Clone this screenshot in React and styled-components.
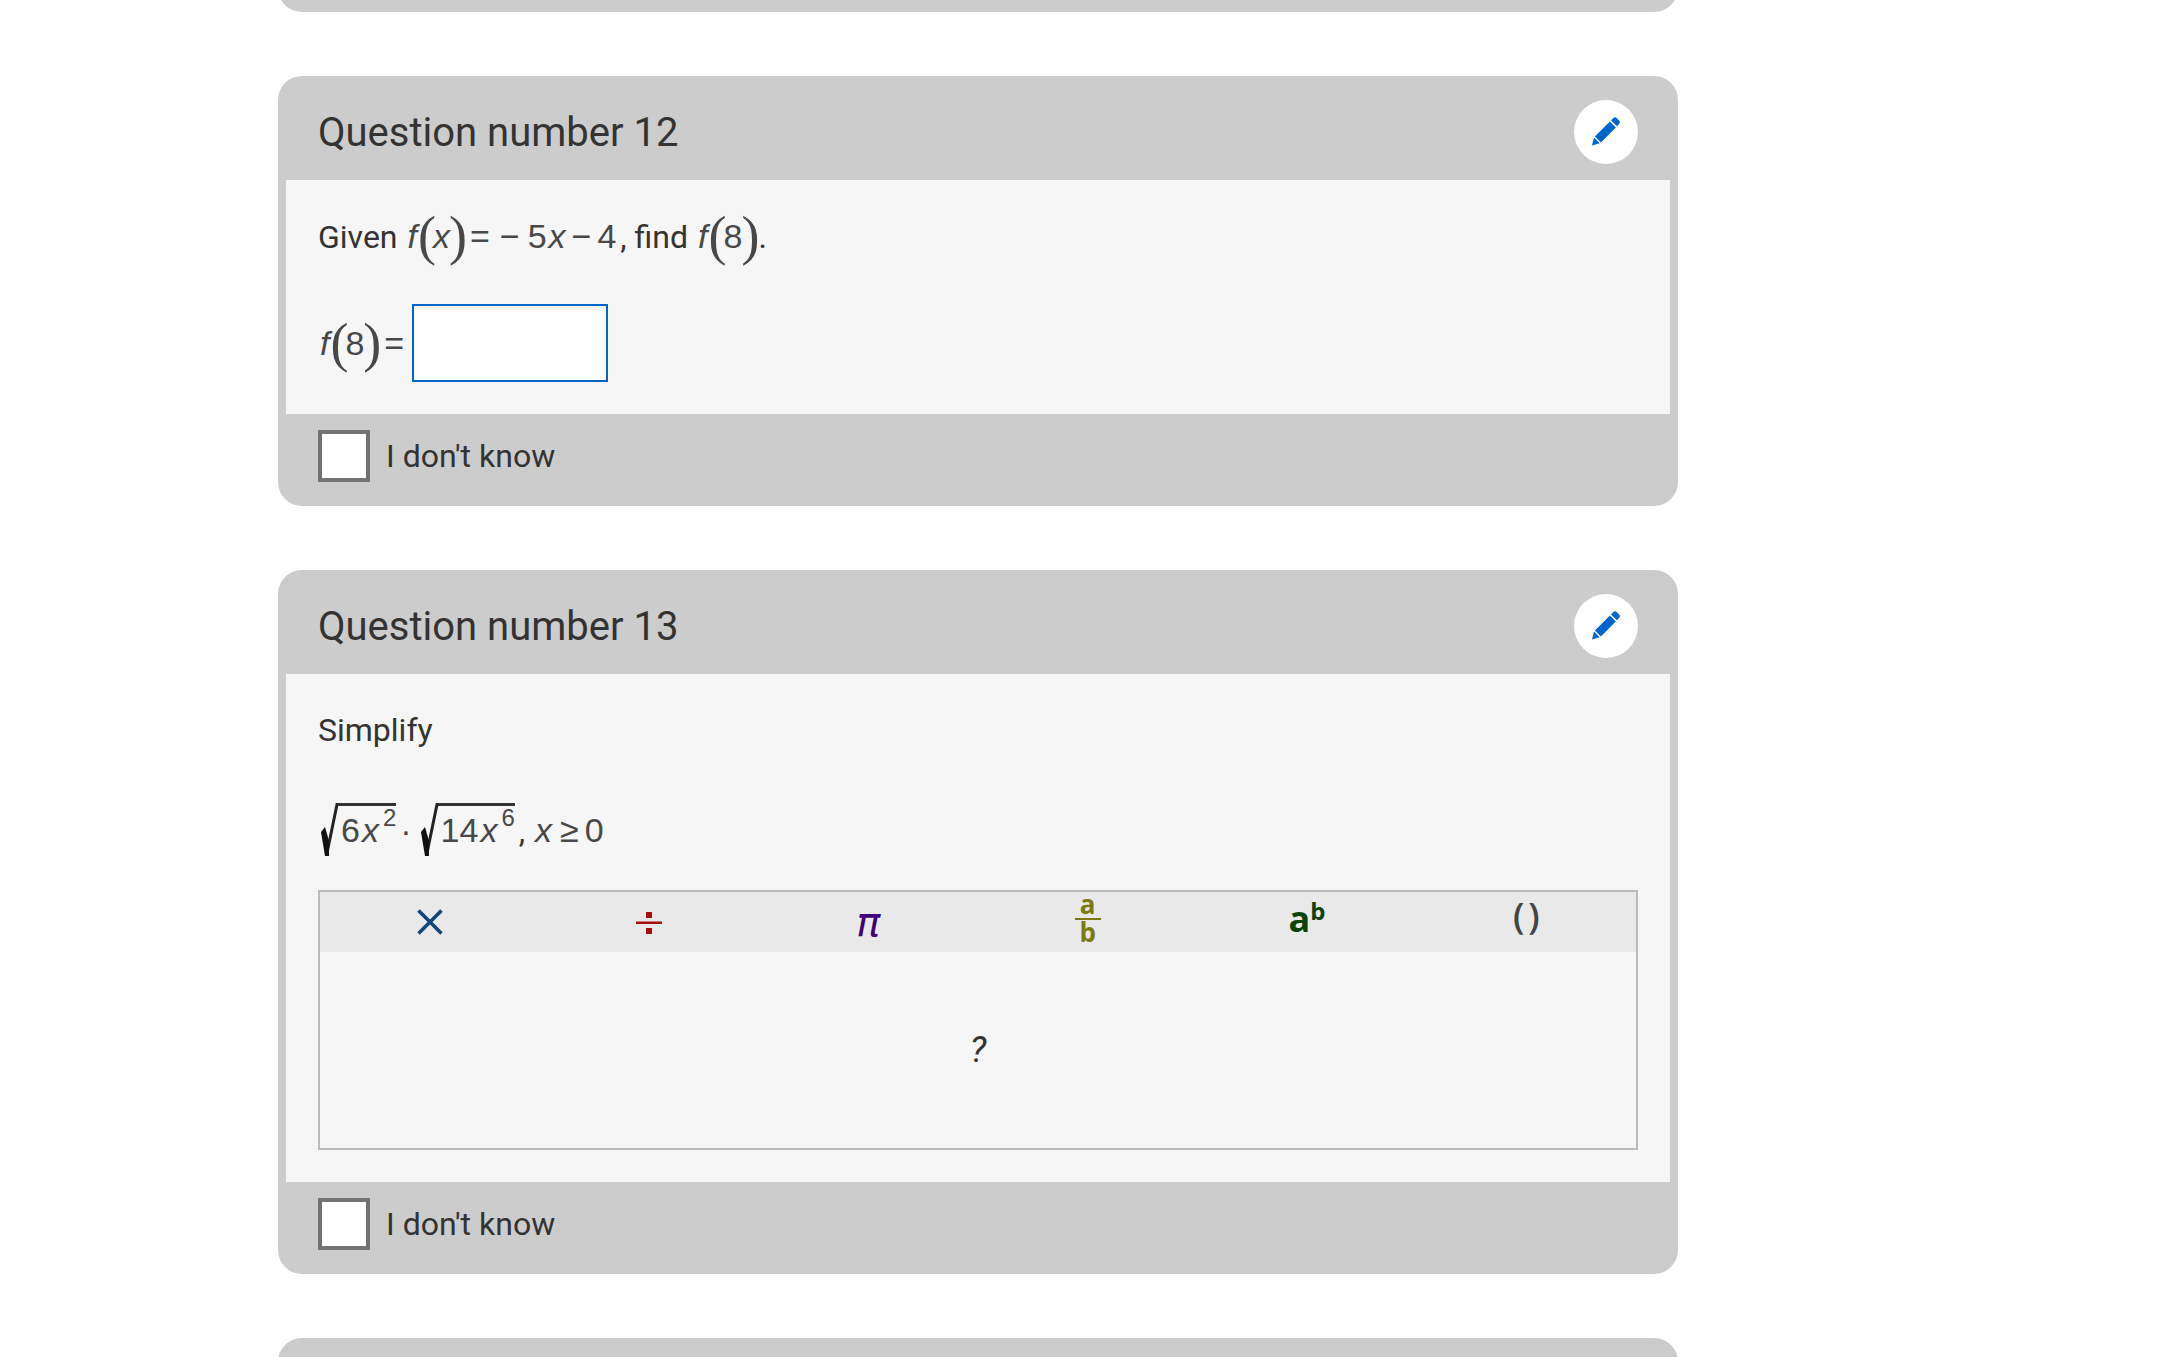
import React from "react";
import styled, { createGlobalStyle, css } from "styled-components";

const GlobalStyle = createGlobalStyle`
  *, *::before, *::after { box-sizing: border-box; }
  html { overflow: hidden; }
  body {
    margin: 0;
    background: #fff;
    color: #333;
    font-family: Roboto, "Liberation Sans", sans-serif;
    font-size: 32px;
    line-height: 48px;
  }
`;

const Page = styled.main`
  display: flex;
  flex-direction: column;
  gap: 64px;
  height: 100vh;
  padding: 0 498px 0 278px;
  overflow: hidden;
`;

const Card = styled.section`
  flex: none;
  padding: 0 8px;
  border-radius: 24px;
  background: #ccc;
`;

const CardEnd = styled.div`
  flex: none;
  height: 12px;
  overflow: hidden;
  display: flex;
  align-items: flex-end;

  &::after {
    content: "";
    flex: 1;
    height: 48px;
    border-radius: 24px;
    background: #ccc;
  }
`;

const CardStart = styled.div`
  flex: none;
  height: 104px;
  border-radius: 24px 24px 0 0;
  background: #ccc;
`;

const Header = styled.header`
  display: flex;
  align-items: center;
  justify-content: space-between;
  height: 104px;
  padding: 8px 32px 0;
`;

const Title = styled.h2`
  margin: 0;
  padding-top: 2px;
  font-size: 40px;
  font-weight: 400;
  line-height: 48px;
`;

const EditButton = styled.button`
  display: flex;
  align-items: center;
  justify-content: center;
  width: 64px;
  height: 64px;
  padding: 0;
  border: 0;
  border-radius: 50%;
  background: #fff;
  color: #06c;
  cursor: pointer;
`;

const Body = styled.div`
  padding: 32px;
  background: #f6f6f6;
`;

const Line = styled.p`
  display: flex;
  align-items: baseline;
  height: 48px;
  margin: 0 0 44px;
`;

const RootLine = styled(Line)`
  height: 60px;
  margin: 0 0 27px;
  padding-top: 5px;
  box-sizing: content-box;
`;

const AnswerLine = styled.div`
  display: flex;
  align-items: center;
  gap: 8px;
  height: 78px;
`;

const AnswerInput = styled.input`
  width: 196px;
  height: 78px;
  padding: 0 12px;
  border: 2px solid #06c;
  border-radius: 0;
  outline: 0;
  background: #fff;
  box-shadow: inset 0 2px 4px rgba(0, 0, 0, 0.08);
  font: inherit;
`;

const Footer = styled.footer`
  padding: 16px 32px 24px;
`;

const CheckLabel = styled.label`
  display: inline-flex;
  align-items: center;
  gap: 16px;
  height: 52px;
  vertical-align: top;
`;

const CheckBox = styled.input`
  appearance: none;
  flex: none;
  width: 52px;
  height: 52px;
  margin: 0;
  border: 4px solid #737373;
  background: #fff;

  &:checked { background: #06c; }
`;

const space = css`
  margin-left: ${(p) => p.$before || 0}px;
`;

const Formula = styled.span`
  ${space}
  display: inline-flex;
  align-items: baseline;
  color: #484848;
  font-family: "Liberation Sans", Arial, sans-serif;
  font-size: 34px;
  line-height: 48px;
`;

const Num = styled.span`
  ${space}
`;

const Var = styled.i`
  ${space}
`;

const Paren = styled.span`
  position: relative;
  top: 6px;
  margin: ${(p) => (p.$close ? "0 -3px 0 -1px" : "0 -3px 0 1px")};
  font-family: "Liberation Serif", serif;
  font-size: 54px;
  line-height: 0;
`;

const Plain = styled.span`
  ${space}
`;

const Sup = styled.sup`
  ${space}
  position: relative;
  top: -16px;
  font-size: 24px;
  line-height: 24px;
  vertical-align: baseline;
`;

const Root = styled.span`
  ${space}
  display: inline-flex;
  align-items: baseline;
`;

const RootSign = styled.svg`
  align-self: flex-start;
  flex: none;
  width: 18px;
  height: 54px;
`;

const Radicand = styled.span`
  display: inline-flex;
  align-items: baseline;
  padding-left: 3px;
  border-top: 3px solid #333;
`;

const Editor = styled.div`
  border: 2px solid #bababa;
`;

const Toolbar = styled.div`
  display: grid;
  grid-template-columns: repeat(6, 1fr);
  height: 60px;
  background: #e9e9e9;
`;

const Tool = styled.button`
  display: flex;
  align-items: center;
  justify-content: center;
  gap: 4px;
  padding: 0 0 ${(p) => p.$lift || 0}px;
  border: 0;
  background: none;
  color: ${(p) => p.$color};
  font-family: "Open Sans", "Noto Sans", sans-serif;
  font-size: 36px;
  font-weight: 600;
  line-height: 32px;
  cursor: pointer;
`;

const Fraction = styled.span`
  display: flex;
  flex-direction: column;
  align-items: center;
  align-self: flex-start;
  width: 26px;
  font-size: 26px;
  font-weight: 700;
  line-height: 24px;
`;

const Numerator = styled.span`
  align-self: stretch;
  padding-bottom: 2px;
  border-bottom: 2px solid currentColor;
`;

const PowerPair = styled.span`
  display: flex;
  align-items: baseline;
  font-size: 36px;
  font-weight: 700;
`;

const Power = styled.sup`
  position: relative;
  top: -12px;
  font-size: 24px;
  line-height: 24px;
  vertical-align: baseline;
`;

const Pi = styled.i`
  font-family: "DejaVu Sans", sans-serif;
  font-size: 40px;
  font-weight: 400;
`;

const Canvas = styled.div`
  display: flex;
  align-items: center;
  justify-content: center;
  height: 196px;
  font-size: 36px;
  font-style: italic;
`;

function PencilIcon() {
  return (
    <svg width="30" height="30" viewBox="0 0 30 30" fill="currentColor" aria-hidden="true">
      <path d="M22.4 .9Q24 -.5 25.6 .9L28.3 3.800Q29.6 5.300 28.2 6.700L25.900 9.300L20 3.400Z" />
      <path d="M18.900 4.400L24.900 10.400L9.900 25.400L3.900 19.400Z" />
      <path d="M3 20.400L8.800 26.200L1 28.600Z" />
    </svg>
  );
}

function SquareRoot({ before, children }) {
  return (
    <Root $before={before}>
      <RootSign viewBox="0 0 18 54" aria-hidden="true">
        <path d="M3 29L7 50L17 1.500H18" fill="none" stroke="#222" strokeWidth="3" />
        <path d="M1 29L5 24L9 38L9 53H5Z" fill="#111" />
      </RootSign>
      <Radicand>{children}</Radicand>
    </Root>
  );
}

function FunctionOf({ children }) {
  return (
    <>
      <Var>f</Var>
      <Paren>(</Paren>
      {children}
      <Paren $close>)</Paren>
    </>
  );
}

function Question({ number, children }) {
  return (
    <Card>
      <Header>
        <Title>Question number {number}</Title>
        <EditButton type="button" aria-label={"Edit question " + number}>
          <PencilIcon />
        </EditButton>
      </Header>
      <Body>{children}</Body>
      <Footer>
        <CheckLabel>
          <CheckBox type="checkbox" />
          I don't know
        </CheckLabel>
      </Footer>
    </Card>
  );
}

export default function App() {
  return (
    <>
      <GlobalStyle />
      <Page>
        <CardEnd />
        <Question number={12}>
          <Line>
            <span>Given</span>
            <Formula $before={10}>
              <FunctionOf><Var>x</Var></FunctionOf>
              <Num $before={6}>=</Num>
              <Num $before={10}>−</Num>
              <Num $before={8}>5</Num>
              <Var $before={2}>x</Var>
              <Num $before={6}>−</Num>
              <Num $before={6}>4</Num>
            </Formula>
            <Plain $before={4}>, find</Plain>
            <Formula $before={10}>
              <FunctionOf><Num>8</Num></FunctionOf>
            </Formula>
            <Plain $before={2}>.</Plain>
          </Line>
          <AnswerLine>
            <Formula $before={2}>
              <FunctionOf><Num>8</Num></FunctionOf>
              <Num $before={6}>=</Num>
            </Formula>
            <AnswerInput type="text" aria-label="f(8)" />
          </AnswerLine>
        </Question>
        <Question number={13}>
          <Line>Simplify</Line>
          <RootLine>
            <Formula $before={2}>
              <SquareRoot>
                <Num>6</Num><Var $before={2}>x</Var><Sup $before={4}>2</Sup>
              </SquareRoot>
              <Num $before={4}>·</Num>
              <SquareRoot before={8}>
                <Num>14</Num><Var $before={2}>x</Var><Sup $before={4}>6</Sup>
              </SquareRoot>
            </Formula>
            <Plain $before={4}>,</Plain>
            <Formula $before={10}>
              <Var>x</Var>
              <Num $before={8}>≥</Num>
              <Num $before={6}>0</Num>
            </Formula>
          </RootLine>
          <Editor>
            <Toolbar>
              <Tool type="button" $color="#0f4578" aria-label="Multiply">
                <svg width="26" height="26" viewBox="0 0 26 26" aria-hidden="true">
                  <path d="M1.500 1.500L24.500 24.500M24.500 1.500L1.500 24.500" stroke="currentColor" strokeWidth="3.500" />
                </svg>
              </Tool>
              <Tool type="button" $color="#a80f0f" aria-label="Divide">
                <svg width="26" height="26" viewBox="0 0 26 26" fill="currentColor" aria-hidden="true">
                  <path d="M0 12.500H26V15H0ZM10 3H16V9H10ZM10 19H16V25H10Z" />
                </svg>
              </Tool>
              <Tool type="button" $color="#40007a"><Pi>π</Pi></Tool>
              <Tool type="button" $color="#7b7b12">
                <Fraction><Numerator>a</Numerator><span>b</span></Fraction>
              </Tool>
              <Tool type="button" $color="#0c420c" $lift={6}>
                <PowerPair>a<Power>b</Power></PowerPair>
              </Tool>
              <Tool type="button" $color="#444" $lift={12}>
                <span>(</span><span>)</span>
              </Tool>
            </Toolbar>
            <Canvas>?</Canvas>
          </Editor>
        </Question>
        <CardStart />
      </Page>
    </>
  );
}
